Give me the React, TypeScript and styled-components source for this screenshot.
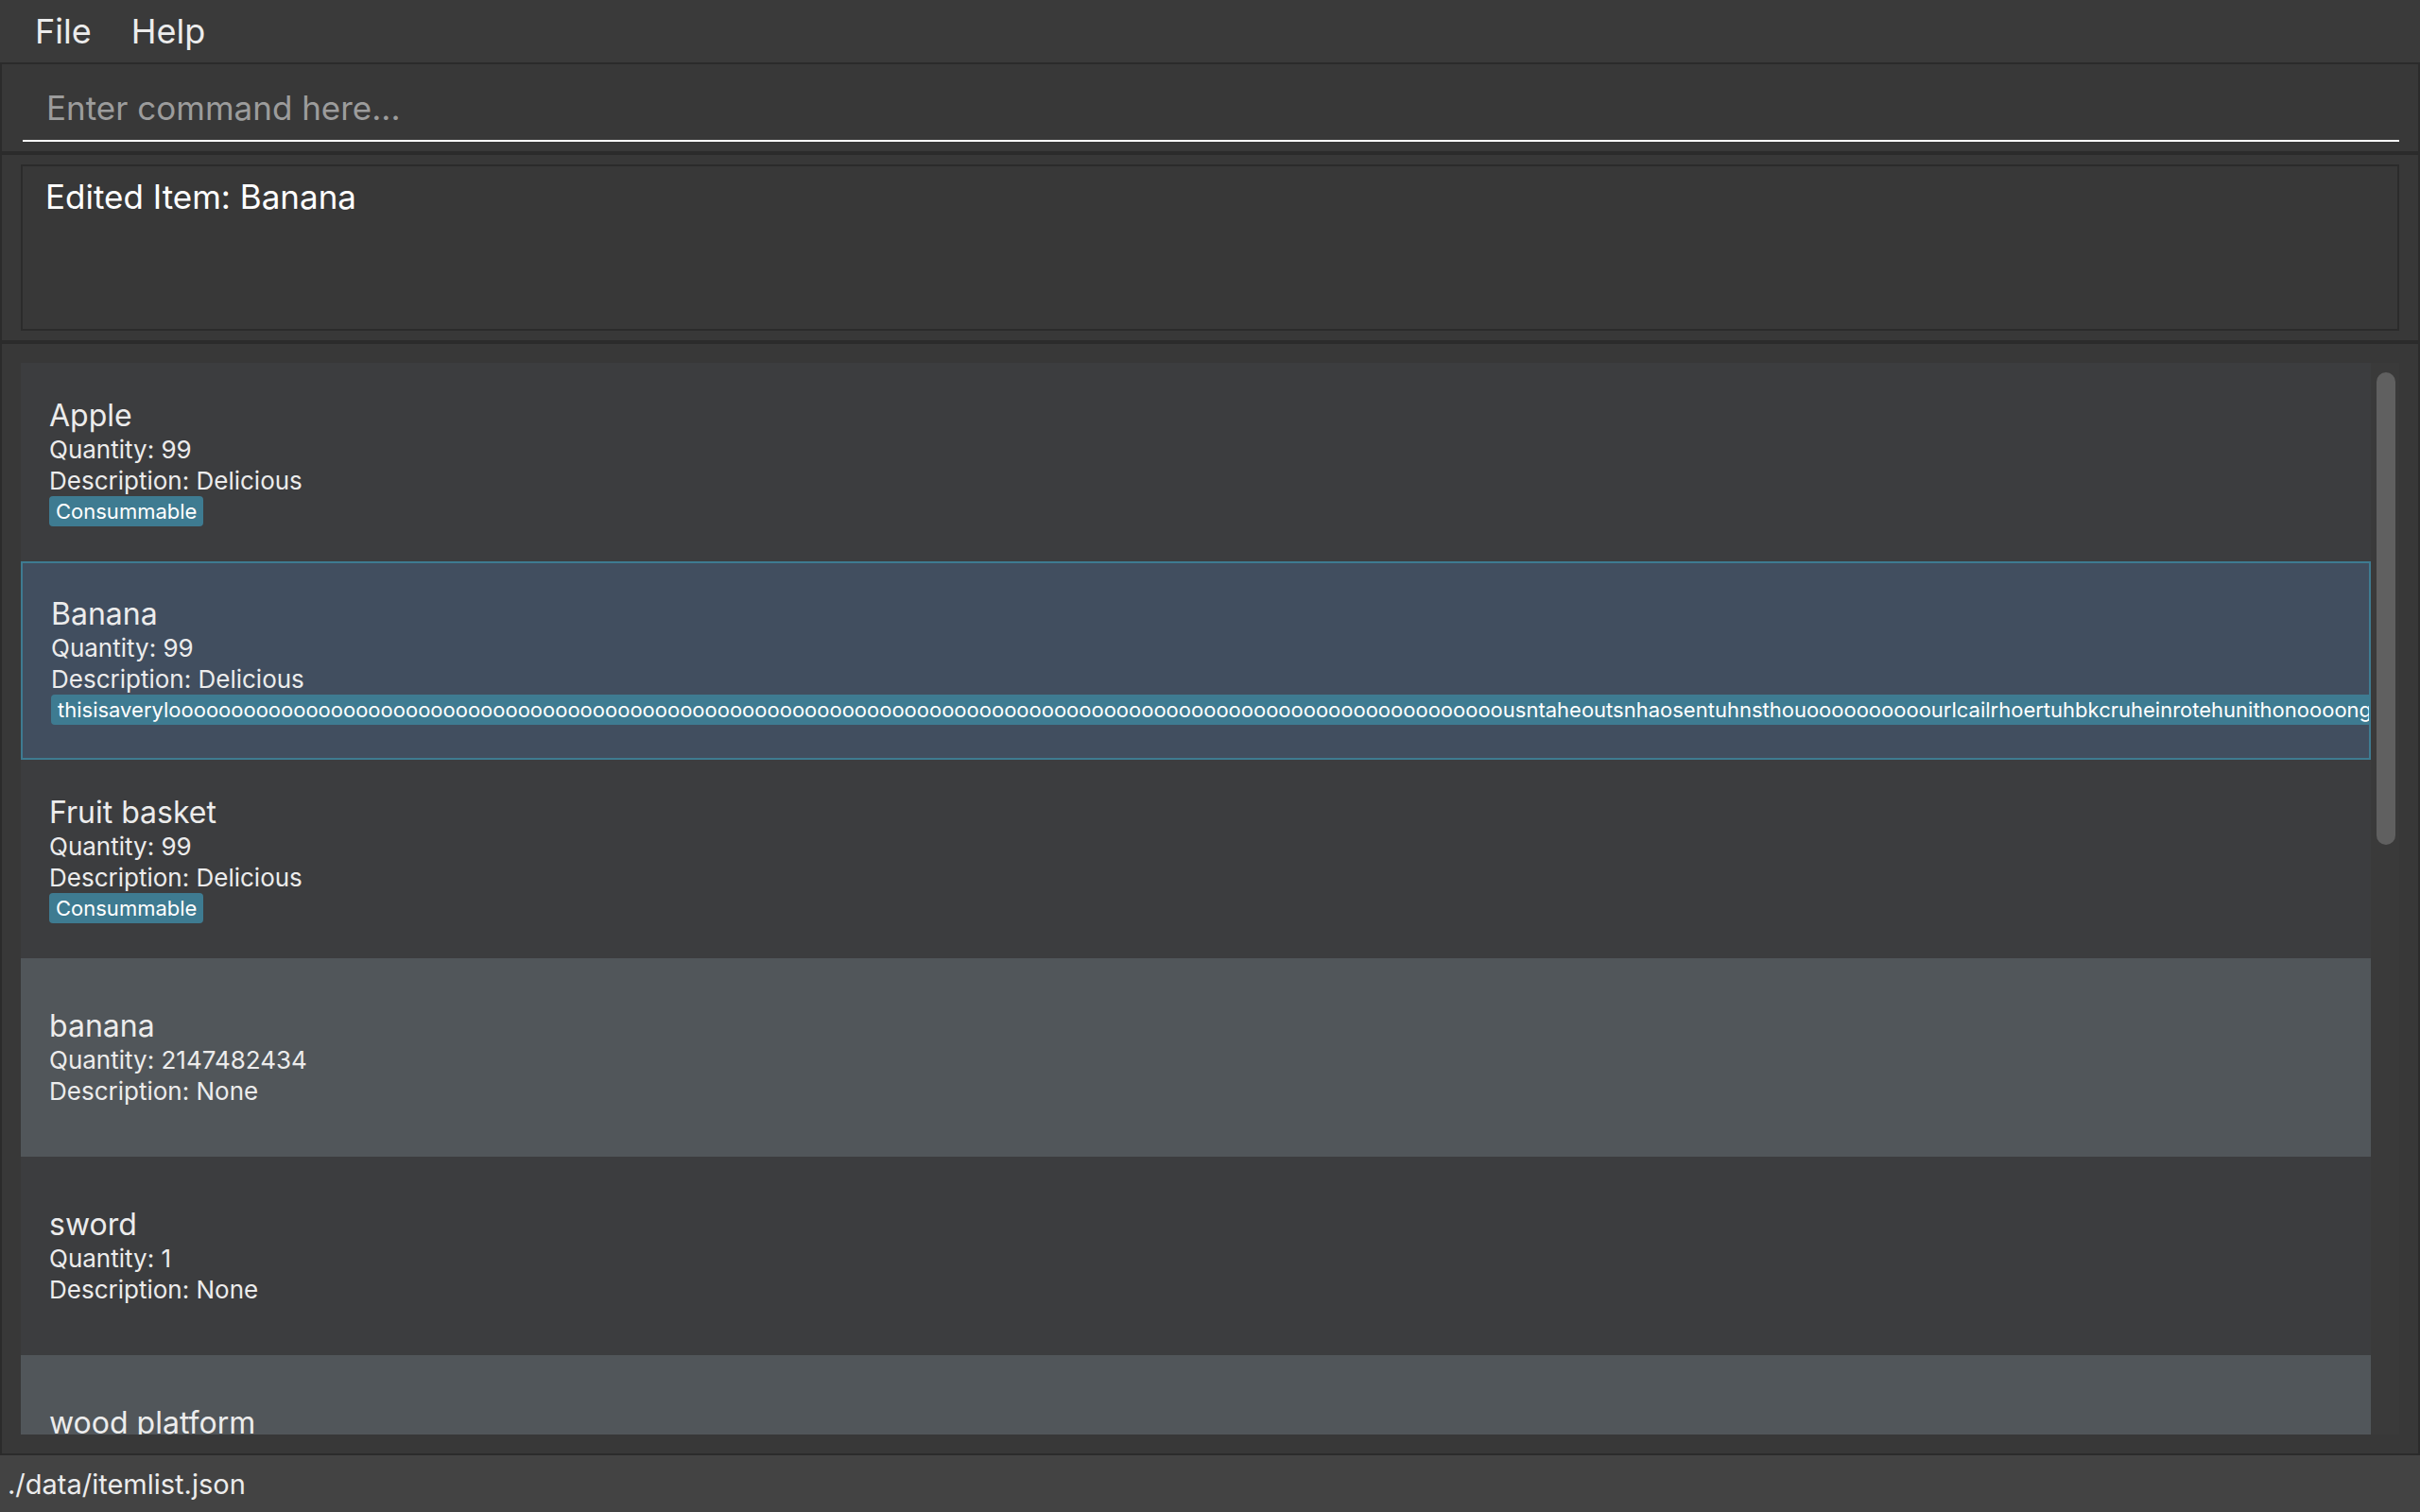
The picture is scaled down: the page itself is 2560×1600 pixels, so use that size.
import styled, { createGlobalStyle, css } from "styled-components";

type Item = {
  name: string;
  quantity: string;
  description: string;
  tags: string[];
};

const LONG_TAG =
  "thisisaverylo" +
  "o".repeat(106) +
  "usntaheoutsnhaosentuhnsthou" +
  "o".repeat(10) +
  "urlcailrhoertuhbkcruheinrotehunithonoooongtaesnuthoeu";

const items: Item[] = [
  { name: "Apple", quantity: "99", description: "Delicious", tags: ["Consummable"] },
  { name: "Banana", quantity: "99", description: "Delicious", tags: [LONG_TAG] },
  { name: "Fruit basket", quantity: "99", description: "Delicious", tags: ["Consummable"] },
  { name: "banana", quantity: "2147482434", description: "None", tags: [] },
  { name: "sword", quantity: "1", description: "None", tags: [] },
  { name: "wood platform", quantity: "3", description: "None", tags: [] },
];

const SELECTED = 1;

const GlobalStyle = createGlobalStyle`
  html, body {
    margin: 0;
    padding: 0;
    background: #383838;
    font-family: Inter, "Noto Sans", "Liberation Sans", sans-serif;
  }
  #root {
    height: 100vh;
  }
  * {
    box-sizing: border-box;
  }
`;

const App = () => {
  return (
    <>
      <GlobalStyle />
      <Window>
        <MenuBar>
          <MenuItem>File</MenuItem>
          <MenuItem>Help</MenuItem>
        </MenuBar>
        <CommandPanel>
          <CommandInput placeholder="Enter command here..." />
        </CommandPanel>
        <ResultPanel>
          <ResultBox>Edited Item: Banana</ResultBox>
        </ResultPanel>
        <ListPanel>
          <ListView>
            <Cells>
              {items.map((item, i) => (
                <Cell
                  key={item.name}
                  $variant={i === SELECTED ? "selected" : i % 2 ? "alt" : "plain"}
                >
                  <Name>{item.name}</Name>
                  <Detail>Quantity: {item.quantity}</Detail>
                  <Detail>Description: {item.description}</Detail>
                  {item.tags.length > 0 && (
                    <TagRow>
                      {item.tags.map((t) => (
                        <Tag key={t}>{t}</Tag>
                      ))}
                    </TagRow>
                  )}
                </Cell>
              ))}
            </Cells>
            <ScrollTrack>
              <ScrollThumb />
            </ScrollTrack>
          </ListView>
        </ListPanel>
        <StatusBar>./data/itemlist.json</StatusBar>
      </Window>
    </>
  );
};

export default App;

const Window = styled.div`
  display: flex;
  flex-direction: column;
  height: 100vh;
  background: #383838;
`;
const MenuBar = styled.div`
  height: 66px;
  flex-shrink: 0;
  display: flex;
  align-items: center;
  padding-left: 16px;
  background: #3a3a3a;
`;
const MenuItem = styled.div`
  padding: 0 21px;
  font-size: 36px;
  color: #ececec;
`;
const Panel = styled.div`
  flex-shrink: 0;
  border: 2px solid #2b2b2b;
  background: #383838;
`;
const CommandPanel = styled(Panel)`
  height: 96px;
  padding: 12px 20px 10px 22px;
`;
const CommandInput = styled.input`
  display: block;
  width: 100%;
  height: 70px;
  padding: 0 0 0 25px;
  background: transparent;
  border: none;
  border-bottom: 2px solid #ffffff;
  outline: none;
  font-family: inherit;
  font-size: 35px;
  color: #ffffff;
  &::placeholder {
    color: #9c9c9c;
  }
`;
const ResultPanel = styled(Panel)`
  height: 200px;
  padding: 10px 20px;
`;
const ResultBox = styled.div`
  height: 100%;
  border: 2px solid #2b2b2b;
  padding: 10px 24px;
  font-size: 35px;
  line-height: 44px;
  color: #ffffff;
`;
const ListPanel = styled(Panel)`
  flex: 1;
  min-height: 0;
  padding: 20px;
`;
const ListView = styled.div`
  display: flex;
  height: 100%;
  overflow: hidden;
`;
const Cells = styled.div`
  flex: 1;
  min-width: 0;
  display: flex;
  flex-direction: column;
  overflow: hidden;
`;
const variants = {
  plain: css`
    background: #3c3d3f;
  `,
  alt: css`
    background: #51565a;
  `,
  selected: css`
    background: #414e5f;
    border: 2px solid #3e7b91;
  `,
};
const Cell = styled.div<{ $variant: keyof typeof variants }>`
  height: 210px;
  flex-shrink: 0;
  display: flex;
  flex-direction: column;
  justify-content: center;
  padding: 0 30px;
  overflow: hidden;
  color: #ececec;
  ${(p) => variants[p.$variant]}
`;
const Name = styled.div`
  font-size: 32px;
  line-height: 38px;
  white-space: nowrap;
`;
const Detail = styled.div`
  font-size: 26px;
  line-height: 33px;
  white-space: nowrap;
`;
const TagRow = styled.div`
  display: flex;
  gap: 8px;
`;
const Tag = styled.span`
  flex-shrink: 0;
  padding: 0 7px;
  border-radius: 4px;
  background: #3e7b91;
  color: #ffffff;
  font-size: 22px;
  line-height: 32px;
  white-space: nowrap;
`;
const ScrollTrack = styled.div`
  width: 30px;
  flex-shrink: 0;
  padding: 10px 4px 0 6px;
  background: #3a3a3a;
`;
const ScrollThumb = styled.div`
  height: 500px;
  border-radius: 10px;
  background: #606060;
`;
const StatusBar = styled.div`
  height: 60px;
  flex-shrink: 0;
  display: flex;
  align-items: center;
  padding-left: 8px;
  background: #434343;
  font-size: 29px;
  color: #ececec;
`;
